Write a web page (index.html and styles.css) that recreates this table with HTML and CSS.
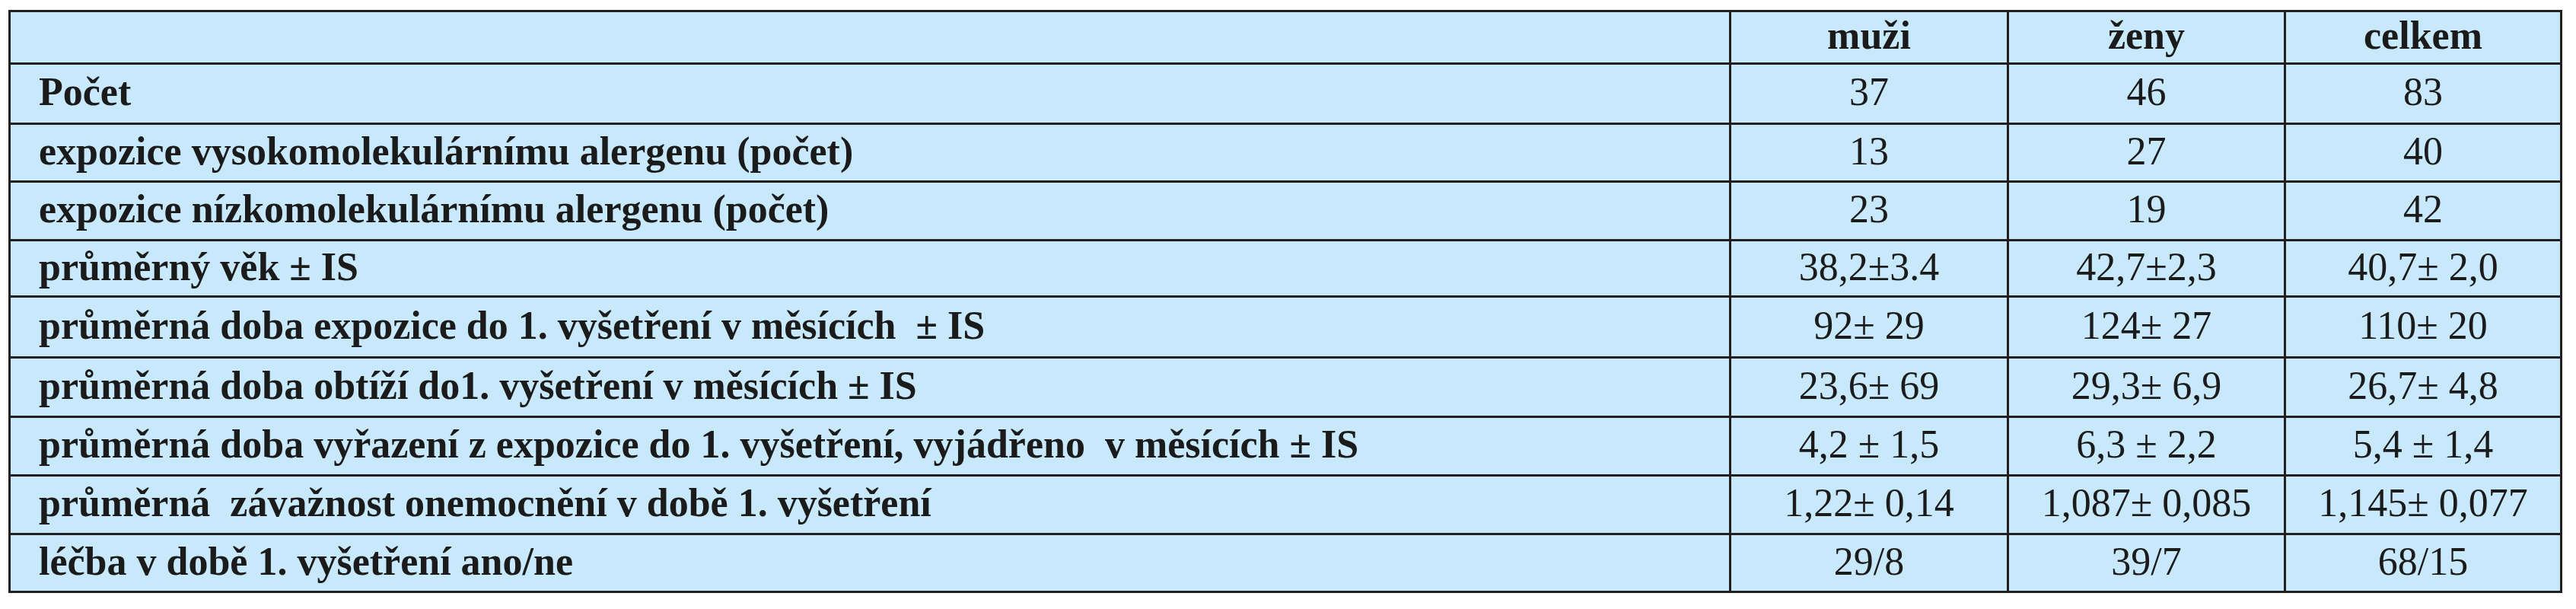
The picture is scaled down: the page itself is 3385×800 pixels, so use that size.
FILE: index.html
```html
<!DOCTYPE html>
<html lang="cs">
<head>
<meta charset="utf-8">
<title>Tabulka</title>
<link rel="stylesheet" href="styles.css">
</head>
<body>
<div class="sheet">
  <div class="cell head"></div>
  <div class="cell head num">muži</div>
  <div class="cell head num">ženy</div>
  <div class="cell head num">celkem</div>

  <div class="cell label">Počet</div>
  <div class="cell num">37</div>
  <div class="cell num">46</div>
  <div class="cell num">83</div>

  <div class="cell label">expozice vysokomolekulárnímu alergenu (počet)</div>
  <div class="cell num">13</div>
  <div class="cell num">27</div>
  <div class="cell num">40</div>

  <div class="cell label">expozice nízkomolekulárnímu alergenu (počet)</div>
  <div class="cell num">23</div>
  <div class="cell num">19</div>
  <div class="cell num">42</div>

  <div class="cell label">průměrný věk ± IS</div>
  <div class="cell num">38,2±3.4</div>
  <div class="cell num">42,7±2,3</div>
  <div class="cell num">40,7± 2,0</div>

  <div class="cell label">průměrná doba expozice do 1. vyšetření v měsících &nbsp;± IS</div>
  <div class="cell num">92± 29</div>
  <div class="cell num">124± 27</div>
  <div class="cell num">110± 20</div>

  <div class="cell label">průměrná doba obtíží do1. vyšetření v měsících ± IS</div>
  <div class="cell num">23,6± 69</div>
  <div class="cell num">29,3± 6,9</div>
  <div class="cell num">26,7± 4,8</div>

  <div class="cell label">průměrná doba vyřazení z expozice do 1. vyšetření, vyjádřeno &nbsp;v měsících ± IS</div>
  <div class="cell num">4,2 ± 1,5</div>
  <div class="cell num">6,3 ± 2,2</div>
  <div class="cell num">5,4 ± 1,4</div>

  <div class="cell label">průměrná &nbsp;závažnost onemocnění v době 1. vyšetření</div>
  <div class="cell num">1,22± 0,14</div>
  <div class="cell num">1,087± 0,085</div>
  <div class="cell num">1,145± 0,077</div>

  <div class="cell label">léčba v době 1. vyšetření ano/ne</div>
  <div class="cell num">29/8</div>
  <div class="cell num">39/7</div>
  <div class="cell num">68/15</div>
</div>
</body>
</html>
```

FILE: styles.css
```css
html, body {
  margin: 0;
  padding: 0;
  background: #ffffff;
}

body {
  font-family: "Liberation Serif", "Times New Roman", serif;
  color: #1b1b1b;
}

.sheet {
  display: grid;
  grid-template-columns: 2258px 362px 361px 360px;
  grid-template-rows: 66px 76px 73px 74px 71px 77px 75px 74px 74px 73px;
  gap: 3px;
  padding: 3px;
  margin: 13px 0 0 11px;
  width: max-content;
  background: #231f20;
}

.cell {
  background: #c8e9fb;
  display: flex;
  align-items: center;
  font-size: 52px;
  line-height: 60px;
  padding-bottom: 4px;
  box-sizing: border-box;
  white-space: pre-wrap;
}

.label {
  font-weight: bold;
  padding-left: 37px;
}

.num {
  justify-content: center;
}

.head.num {
  font-weight: bold;
}
```
